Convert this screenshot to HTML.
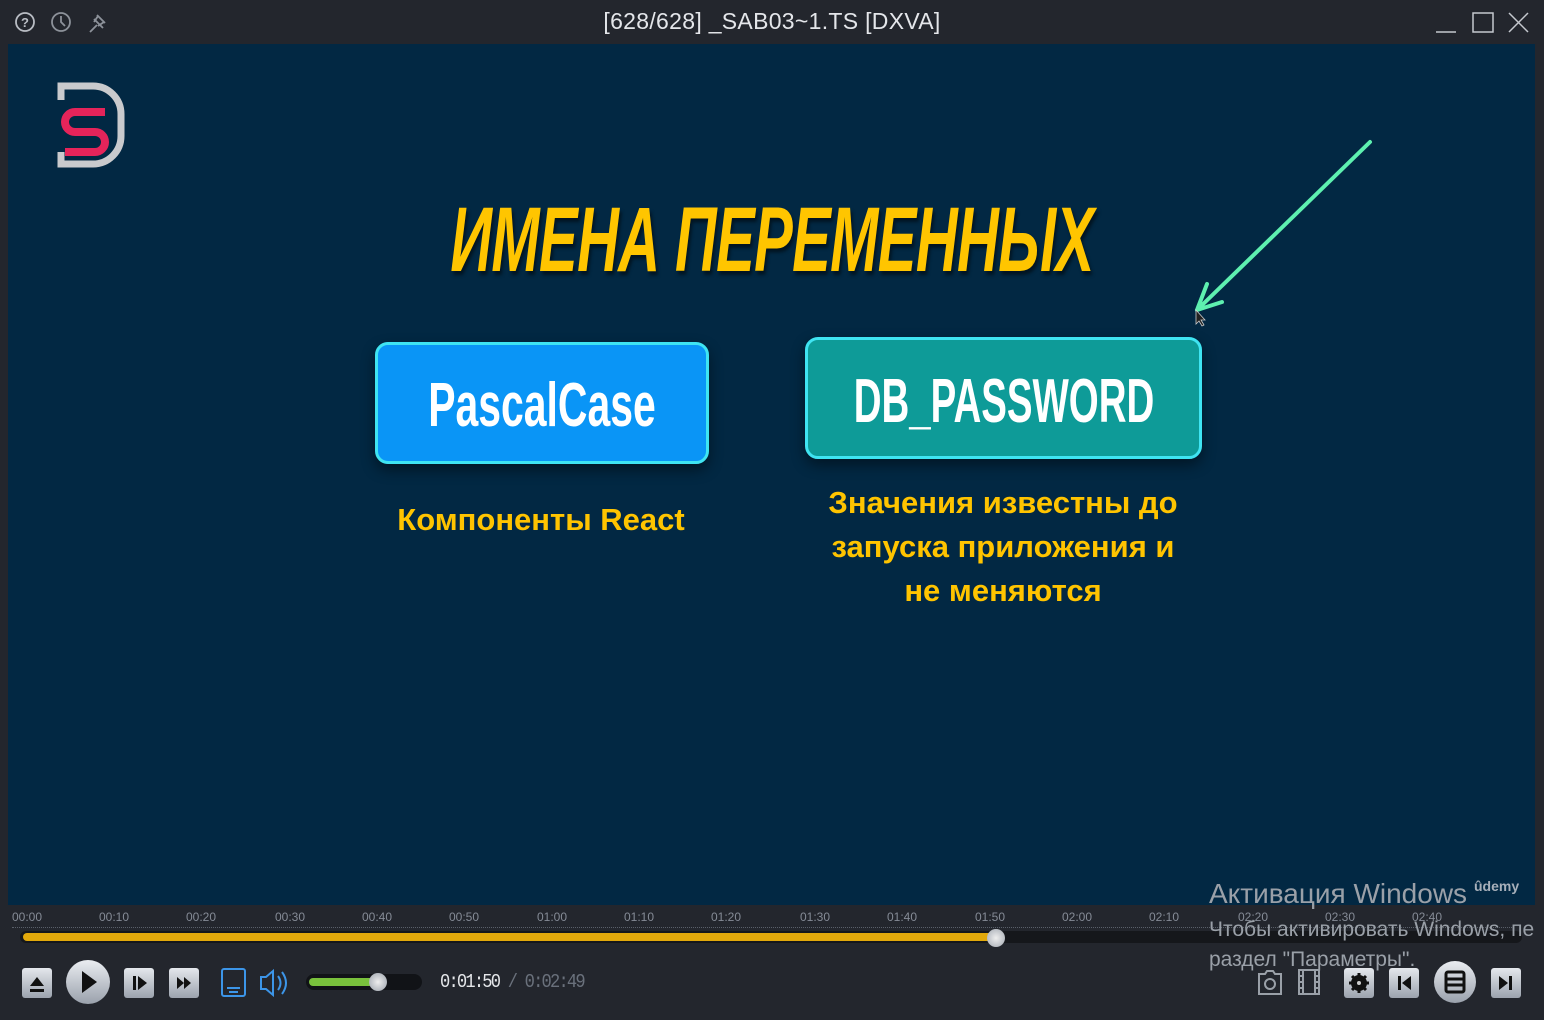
<!DOCTYPE html>
<html><head><meta charset="utf-8"><style>
*{margin:0;padding:0;box-sizing:border-box}
body{width:1544px;height:1020px;background:#23262d;position:relative;overflow:hidden;font-family:"Liberation Sans",sans-serif}
.abs{position:absolute}
#video{left:8px;top:44px;width:1527px;height:861px;background:#022843}
.title{position:absolute;left:772px;top:188px;white-space:nowrap;transform:translateX(-50%) scaleX(0.63);font-weight:bold;font-style:italic;font-size:92px;color:#ffc500;text-shadow:3px 4px 4px rgba(0,0,0,.5);letter-spacing:-1px}
.box{position:absolute;border:3px solid #3fe4f2;border-radius:13px;box-shadow:0 6px 14px rgba(0,0,0,.45)}
.box span{position:absolute;left:50%;white-space:nowrap;font-weight:bold;color:#fff;font-size:62px}
.sub{position:absolute;color:#ffc400;font-weight:bold;font-size:31px;text-align:center;line-height:44px;white-space:nowrap}
.tl{position:absolute;top:910px;font-size:12px;color:#858b96}
.btn{position:absolute;background:linear-gradient(#e4e7ec,#9ca3ae);border-radius:3px}
</style></head><body>
<svg class="abs" style="left:12px;top:10px" width="100" height="26" viewBox="0 0 100 26">
<circle cx="13" cy="12" r="9" fill="none" stroke="#b9bdc4" stroke-width="1.8"/>
<text x="13" y="17" font-size="13" font-weight="bold" fill="#b9bdc4" text-anchor="middle" font-family="Liberation Sans">?</text>
<circle cx="49" cy="12" r="9" fill="none" stroke="#8d929a" stroke-width="1.8"/>
<path d="M49 6v6l4 4" fill="none" stroke="#8d929a" stroke-width="1.8"/>
<path d="M78 22l7-7M82 9l9 9M85 5l8 8M86 6l-4 6M92 12l-6 4" fill="none" stroke="#8d929a" stroke-width="1.8"/>
</svg>
<div class="abs" style="left:0;width:1544px;top:8px;text-align:center;color:#e4e6ea;font-size:23px;letter-spacing:.3px">[628/628] _SAB03~1.TS [DXVA]</div>
<svg class="abs" style="left:1430px;top:8px" width="110" height="30" viewBox="0 0 110 30">
<path d="M6 24h20" stroke="#c5c8ce" stroke-width="1.5"/>
<rect x="43" y="5" width="20" height="19" fill="none" stroke="#c5c8ce" stroke-width="1.5"/>
<path d="M79 5l19 19M98 5L79 24" stroke="#c5c8ce" stroke-width="1.5"/>
</svg>
<div id="video" class="abs"></div>
<svg class="abs" style="left:55px;top:82px" width="75" height="88" viewBox="0 0 75 88">
<path d="M6 70v12h32a28 28 0 0 0 28-28V32A28 28 0 0 0 38 4H6v14" fill="none" stroke="#c9cacd" stroke-width="7"/>
<path d="M50 30H20a10 10 0 0 0 0 20h20a10 10 0 0 1 0 20H10" fill="none" stroke="#e5245a" stroke-width="8"/>
</svg>
<div class="title">ИМЕНА ПЕРЕМЕННЫХ</div>
<svg class="abs" style="left:1180px;top:130px" width="200" height="200" viewBox="1180 130 200 200">
<path d="M1370 142L1197 310M1197 310l10-26M1197 310l25-8" stroke="#5ef0b0" stroke-width="4" stroke-linecap="round" fill="none"/>
<path d="M1196 310v14l3-3 3 5 2-1-3-5h4z" fill="#222" stroke="#ccc" stroke-width=".8"/>
</svg>
<div class="box" style="left:375px;top:342px;width:334px;height:122px;background:#0a95f6"><span style="top:25px;transform:translateX(-50%) scaleX(0.66)">PascalCase</span></div>
<div class="box" style="left:805px;top:337px;width:397px;height:122px;background:#0e9b98"><span style="top:26px;transform:translateX(-50%) scaleX(0.62)">DB_PASSWORD</span></div>
<div class="sub" style="left:341px;width:400px;top:498px">Компоненты React</div>
<div class="sub" style="left:803px;width:400px;top:481px">Значения известны до<br>запуска приложения и<br>не меняются</div>
<div class="abs" style="left:1474px;top:878px;color:#a8b0ba;font-size:14px;font-weight:bold">ûdemy</div>
<div class="tl" style="left:12px">00:00</div><div class="tl" style="left:99px">00:10</div><div class="tl" style="left:186px">00:20</div><div class="tl" style="left:275px">00:30</div><div class="tl" style="left:362px">00:40</div><div class="tl" style="left:449px">00:50</div><div class="tl" style="left:537px">01:00</div><div class="tl" style="left:624px">01:10</div><div class="tl" style="left:711px">01:20</div><div class="tl" style="left:800px">01:30</div><div class="tl" style="left:887px">01:40</div><div class="tl" style="left:975px">01:50</div><div class="tl" style="left:1062px">02:00</div><div class="tl" style="left:1149px">02:10</div><div class="tl" style="left:1238px">02:20</div><div class="tl" style="left:1325px">02:30</div><div class="tl" style="left:1412px">02:40</div>
<div class="abs" style="left:12px;top:927px;width:1500px;height:1px;border-top:1px dotted #5a606a"></div>
<div class="abs" style="left:20px;top:931px;width:1502px;height:12px;background:#15171b;border-radius:6px"></div>
<div class="abs" style="left:23px;top:933px;width:975px;height:8px;background:#e2a90b;border-radius:4px"></div>
<div class="abs" style="left:987px;top:929px;width:18px;height:18px;background:radial-gradient(#eee,#a3a9b2);border-radius:50%"></div>
<div class="btn" style="left:22px;top:968px;width:30px;height:30px"></div>
<svg class="abs" style="left:22px;top:968px" width="30" height="30"><path d="M8 18l7-9 7 9z M8 21h14v3H8z" fill="#111"/></svg>
<div class="abs" style="left:66px;top:960px;width:44px;height:44px;border-radius:50%;background:linear-gradient(#eaedf1,#9aa1ac)"></div>
<svg class="abs" style="left:66px;top:960px" width="44" height="44"><path d="M16 11l15 11-15 11z" fill="#111"/></svg>
<div class="btn" style="left:124px;top:968px;width:30px;height:30px"></div>
<svg class="abs" style="left:124px;top:968px" width="30" height="30"><path d="M9 8h3v14H9zM14 8l9 7-9 7z" fill="#111"/></svg>
<div class="btn" style="left:169px;top:968px;width:30px;height:30px"></div>
<svg class="abs" style="left:169px;top:968px" width="30" height="30"><path d="M8 9l7 6-7 6zM15 9l7 6-7 6z" fill="#111"/></svg>
<svg class="abs" style="left:219px;top:966px" width="70" height="34"><rect x="3" y="3" width="23" height="27" rx="2" fill="none" stroke="#3c95e8" stroke-width="2"/><path d="M8 22h13M10 26h9" stroke="#3c95e8" stroke-width="2"/>
<path d="M42 11h5l7-6v24l-7-6h-5z M59 10q5 7 0 14M63 6q8 11 0 22" fill="none" stroke="#3c95e8" stroke-width="2"/></svg>
<div class="abs" style="left:306px;top:974px;width:116px;height:16px;background:#111317;border-radius:8px"></div>
<div class="abs" style="left:309px;top:978px;width:70px;height:8px;background:#79c13c;border-radius:4px"></div>
<div class="abs" style="left:369px;top:973px;width:18px;height:18px;background:radial-gradient(#eee,#9aa1ab);border-radius:50%"></div>
<div class="abs" style="left:440px;top:971px;font-size:19px;color:#e5e7ea;font-family:'Liberation Mono',monospace;letter-spacing:-2px;transform:scaleX(0.9);transform-origin:left">0:01:50 <span style="color:#6a717c">/ 0:02:49</span></div>
<div class="abs" style="left:1209px;top:878px;color:#9aa0a8;font-size:28px">Активация Windows</div>
<div class="abs" style="left:1209px;top:918px;color:#9aa0a8;font-size:21px;white-space:nowrap">Чтобы активировать Windows, пе</div>
<div class="abs" style="left:1209px;top:948px;color:#9aa0a8;font-size:21px">раздел "Параметры".</div>
<svg class="abs" style="left:1255px;top:966px" width="70" height="32"><path d="M4 8h6l2-3h6l2 3h6v20H4z" fill="none" stroke="#9aa0a8" stroke-width="2"/><circle cx="15" cy="18" r="5" fill="none" stroke="#9aa0a8" stroke-width="2"/>
<path d="M44 4h20v24H44zM48 4v24M60 4v24M44 10h4M44 16h4M44 22h4M60 10h4M60 16h4M60 22h4" fill="none" stroke="#9aa0a8" stroke-width="2"/></svg>
<div class="btn" style="left:1344px;top:968px;width:30px;height:30px"></div>
<svg class="abs" style="left:1344px;top:968px" width="30" height="30"><circle cx="15" cy="15" r="6" fill="none" stroke="#111" stroke-width="4"/><path d="M15 5v20M5 15h20M8 8l14 14M22 8L8 22" stroke="#111" stroke-width="3"/><circle cx="15" cy="15" r="2" fill="#ccc"/></svg>
<div class="btn" style="left:1389px;top:968px;width:30px;height:30px"></div>
<svg class="abs" style="left:1389px;top:968px" width="30" height="30"><path d="M9 8h3v14H9zM22 8v14l-9-7z" fill="#111"/></svg>
<div class="abs" style="left:1434px;top:961px;width:42px;height:42px;border-radius:50%;background:linear-gradient(#eaedf1,#9aa1ac)"></div>
<svg class="abs" style="left:1434px;top:961px" width="42" height="42"><rect x="12" y="11" width="18" height="20" rx="2" fill="none" stroke="#111" stroke-width="3"/><path d="M12 18h18M12 24h18" stroke="#111" stroke-width="3"/></svg>
<div class="btn" style="left:1491px;top:968px;width:30px;height:30px"></div>
<svg class="abs" style="left:1491px;top:968px" width="30" height="30"><path d="M8 8l9 7-9 7zM18 8h3v14h-3z" fill="#111"/></svg>
</body></html>
